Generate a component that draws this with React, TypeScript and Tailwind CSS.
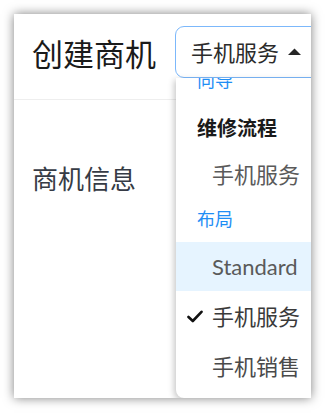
import React from "react";

const font = { fontFamily: '"Lato", "Noto Sans CJK SC", sans-serif' };

export default function App() {
  return (
    <div className="w-[325px] h-[415px] bg-white p-[14px] pb-[17px]" style={font}>
      <div className="relative w-[297px] h-[384px] bg-white overflow-hidden shadow-[0_0_10px_rgba(0,0,0,0.5)]">
        {/* header */}
        <div className="flex items-start h-[86px] border-b border-[#eeeeee]">
          <div className="w-[161px] shrink-0 whitespace-nowrap pl-[18px] pt-[20px] text-[31px] leading-[40px] text-[#1a1a1a]">创建商机</div>
          <div className="mt-[12px] w-[160px] h-[52px] shrink-0 rounded-[9px] border border-[#7cb8fb] flex items-center pl-[15px] text-[22px] text-[#2b2b2b] whitespace-nowrap">
            <span>手机服务</span>
            <svg width="13" height="8" viewBox="0 0 13 8" className="ml-[9px]">
              <path d="M0 7 L6.5 0.5 L13 7 Z" fill="#262626" />
            </svg>
          </div>
        </div>
        <div className="pl-[18px] pt-[62px] text-[26px] leading-[34px] text-[#363b45]">商机信息</div>

        {/* dropdown menu */}
        <div className="absolute left-[162px] top-[64px] w-[150px] h-[320px] bg-white rounded-bl-[8px] shadow-[-2px_2px_6px_rgba(0,0,0,0.22)] overflow-hidden">
          <div className="-mt-[20px]">
            <div className="h-[44px] flex items-center pl-[21px] text-[18px] text-[#1f8ef5]">向导</div>
            <div className="h-[48px] mt-[2px] flex items-center pl-[21px] text-[20px] font-bold text-[#1a1a1a]">维修流程</div>
            <div className="h-[44px] flex items-center pl-[36px] text-[22px] text-[#5a5a5a]">手机服务</div>
            <div className="h-[46px] flex items-center pl-[21px] text-[18px] text-[#1f8ef5]">布局</div>
            <div className="h-[49px] flex items-center pl-[36px] text-[22px] text-[#5a5a5a] bg-[#e6f4ff]">Standard</div>
            <div className="h-[50px] flex items-center pl-[11px] text-[22px] text-[#3a3a3a]">
              <svg width="16" height="13" viewBox="0 0 16 13" className="mr-[9px]">
                <path d="M1.5 7 L5.8 11 L14.5 1.8" stroke="#111" strokeWidth="2.6" fill="none" strokeLinecap="round" strokeLinejoin="round" />
              </svg>
              <span>手机服务</span>
            </div>
            <div className="h-[50px] flex items-center pl-[36px] text-[22px] text-[#4a4a4a]">手机销售</div>
          </div>
        </div>
      </div>
    </div>
  );
}
